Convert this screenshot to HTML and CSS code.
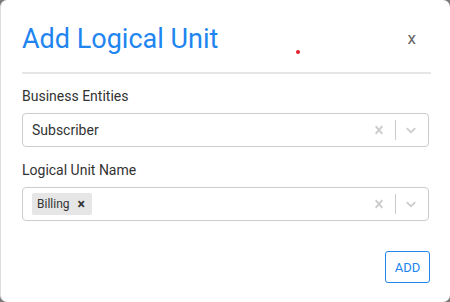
FILE: index.html
```html
<!DOCTYPE html>
<html lang="en">
<head>
    <meta charset="UTF-8">
    <meta name="viewport" content="width=device-width, initial-scale=1.0">
    <title>Add Logical Unit</title>
    <link rel="stylesheet" href="styles.css">
</head>
<body>

<div class="modal">
    <!-- Cabecera -->
    <div class="modal-header">
        <h1 class="modal-title">Add Logical Unit</h1>
        <span class="dot"></span>
        <button class="close-btn">x</button>
    </div>

    <!-- Formulario -->
    <div class="modal-body">
        <label class="field-label">Business Entities</label>
        <div class="select">
            <div class="select-value">
                <span class="single-value">Subscriber</span>
            </div>
            <div class="select-indicators">
                <svg class="indicator clear" viewBox="0 0 20 20"><path d="M14.348 14.849c-0.469 0.469-1.229 0.469-1.697 0l-2.651-3.030-2.651 3.029c-0.469 0.469-1.229 0.469-1.697 0-0.469-0.469-0.469-1.229 0-1.697l2.758-3.15-2.759-3.152c-0.469-0.469-0.469-1.228 0-1.697s1.228-0.469 1.697 0l2.652 3.031 2.651-3.031c0.469-0.469 1.228-0.469 1.697 0s0.469 1.229 0 1.697l-2.758 3.152 2.758 3.15c0.469 0.469 0.469 1.229 0 1.698z"></path></svg>
                <span class="separator"></span>
                <svg class="indicator arrow" viewBox="0 0 20 20"><path d="M4.516 7.548c0.436-0.446 1.043-0.481 1.576 0l3.908 3.747 3.908-3.747c0.533-0.481 1.141-0.446 1.574 0 0.436 0.445 0.408 1.197 0 1.615-0.406 0.418-4.695 4.502-4.695 4.502-0.217 0.223-0.502 0.335-0.787 0.335s-0.57-0.112-0.789-0.335c0 0-4.287-4.084-4.695-4.502s-0.436-1.170 0-1.615z"></path></svg>
            </div>
        </div>

        <label class="field-label">Logical Unit Name</label>
        <div class="select">
            <div class="select-value">
                <span class="chip">
                    <span class="chip-label">Billing</span>
                    <span class="chip-remove">&times;</span>
                </span>
            </div>
            <div class="select-indicators">
                <svg class="indicator clear" viewBox="0 0 20 20"><path d="M14.348 14.849c-0.469 0.469-1.229 0.469-1.697 0l-2.651-3.030-2.651 3.029c-0.469 0.469-1.229 0.469-1.697 0-0.469-0.469-0.469-1.229 0-1.697l2.758-3.150-2.759-3.152c-0.469-0.469-0.469-1.228 0-1.697s1.228-0.469 1.697 0l2.652 3.031 2.651-3.031c0.469-0.469 1.228-0.469 1.697 0s0.469 1.229 0 1.697l-2.758 3.152 2.758 3.150c0.469 0.469 0.469 1.229 0 1.698z"></path></svg>
                <span class="separator"></span>
                <svg class="indicator arrow" viewBox="0 0 20 20"><path d="M4.516 7.548c0.436-0.446 1.043-0.481 1.576 0l3.908 3.747 3.908-3.747c0.533-0.481 1.141-0.446 1.574 0 0.436 0.445 0.408 1.197 0 1.615-0.406 0.418-4.695 4.502-4.695 4.502-0.217 0.223-0.502 0.335-0.787 0.335s-0.57-0.112-0.789-0.335c0 0-4.287-4.084-4.695-4.502s-0.436-1.170 0-1.615z"></path></svg>
            </div>
        </div>
    </div>

    <div class="modal-footer">
        <button class="add-btn">ADD</button>
    </div>
</div>

</body>
</html>
```

FILE: styles.css
```css
body {
    margin: 0;
    font-family: Roboto, "Liberation Sans", Arial, sans-serif;
    background-color: #7a7a7a;
}
.modal {
    box-sizing: border-box;
    width: 450px;
    height: 302px;
    background: #fff;
    border-left: 1px solid #ddd;
    border-radius: 7px;
    padding: 0 19px 0 21px;
}
.modal-header {
    position: relative;
    display: flex;
    justify-content: space-between;
    align-items: center;
    height: 72px;
    border-bottom: 2px solid #e6e6e6;
}
.modal-title {
    margin: 0;
    padding-top: 6px;
    font-size: 27px;
    font-weight: 400;
    color: #2185f0;
}
.dot {
    position: absolute;
    left: 274px;
    top: 50px;
    width: 4px;
    height: 4px;
    border-radius: 50%;
    background: #e0202a;
}
.close-btn {
    background: none;
    border: none;
    padding: 0;
    margin-right: 15px;
    margin-top: 4px;
    font-family: inherit;
    font-size: 17px;
    color: #666;
    cursor: pointer;
}
.modal-body {
    padding-top: 14px;
}
.field-label {
    display: block;
    font-size: 14px;
    color: #333;
    margin-bottom: 9px;
}
.select {
    box-sizing: border-box;
    display: flex;
    align-items: center;
    justify-content: space-between;
    height: 34px;
    margin-right: 2px;
    margin-bottom: 15px;
    border: 1px solid #ccc;
    border-radius: 4px;
}
.select-value {
    padding: 0 9px;
    display: flex;
    align-items: center;
}
.single-value {
    font-size: 14px;
    color: #333;
}
.chip {
    display: flex;
    align-items: center;
    background: #e6e6e6;
    border-radius: 2px;
    height: 22px;
}
.chip-label {
    font-size: 12px;
    color: #333;
    padding: 0 6px 0 5px;
}
.chip-remove {
    font-size: 14px;
    font-weight: bold;
    color: #333;
    padding: 0 7px 0 2px;
}
.select-indicators {
    display: flex;
    align-items: center;
}
.indicator {
    fill: #ccc;
    width: 16px;
    height: 16px;
}
.indicator.clear {
    padding: 0 8px 0 0;
}
.indicator.arrow {
    padding: 0 9px 0 7px;
}
.separator {
    width: 1px;
    height: 20px;
    background: #ccc;
}
.modal-footer {
    display: flex;
    justify-content: flex-end;
    padding-top: 15px;
}
.add-btn {
    background: #fff;
    border: 1px solid #2185f0;
    border-radius: 3px;
    color: #2185f0;
    font-family: inherit;
    font-size: 13px;
    width: 45px;
    height: 32px;
    margin-right: 1px;
    cursor: pointer;
}
```
